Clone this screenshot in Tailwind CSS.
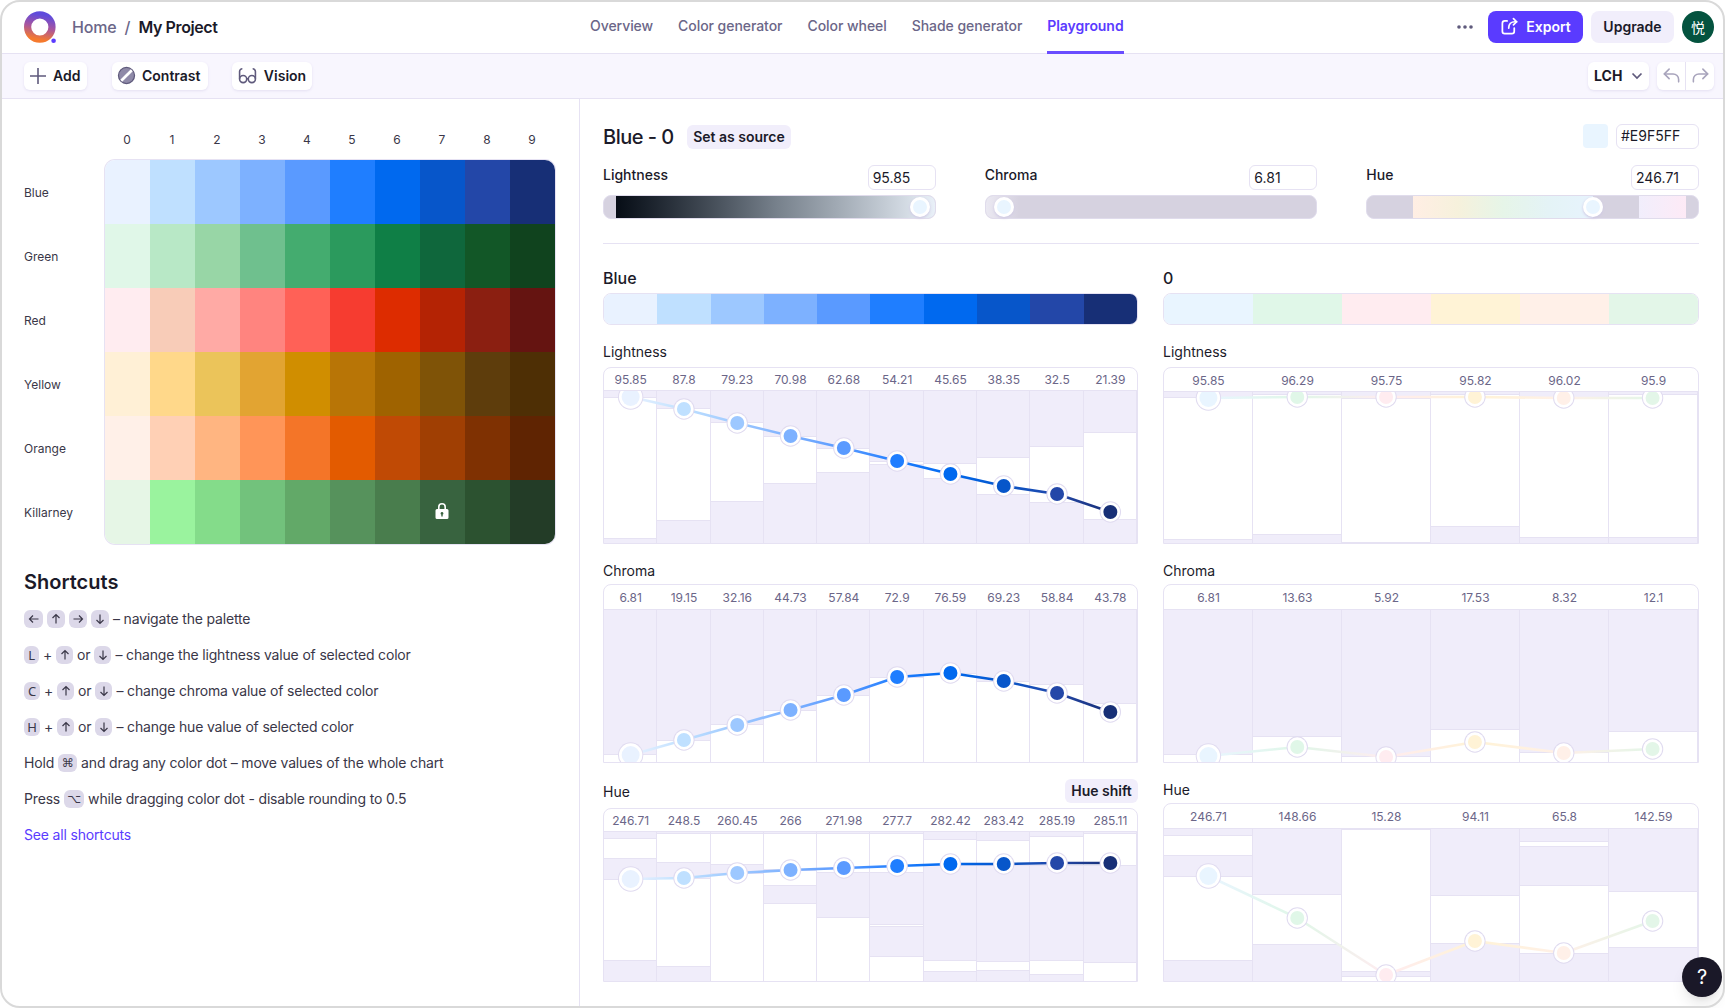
<!DOCTYPE html>
<html lang="en">
<head>
  <meta charset="UTF-8">
  <title>Palette Playground</title>
  <script src="https://cdn.jsdelivr.net/npm/@tailwindcss/browser@4"></script>
</head>
<body class="bg-white text-[#1b1a29] font-['Inter','DejaVu_Sans',sans-serif]">
<div class="relative w-[1725px] h-[1008px] overflow-hidden flex flex-col">

  <!-- Header -->
  <header class="h-[54px] shrink-0 border-b border-[#e6e2f3] flex items-stretch pl-6 pr-[11px]">
    <div class="w-[566px] flex items-center">
      <svg width="32" height="32" viewBox="0 0 32 32" class="shrink-0">
        <defs><linearGradient id="logo" x1="0.6" y1="0" x2="0.4" y2="1"><stop offset="0" stop-color="#5f4bdc"/><stop offset="0.5" stop-color="#a8559f"/><stop offset="1" stop-color="#f57a2e"/></linearGradient></defs>
        <circle cx="15.8" cy="16" r="12.2" fill="none" stroke="url(#logo)" stroke-width="7.2"/>
        <circle cx="29.6" cy="29.7" r="2.3" fill="#5a3bff"/>
      </svg>
      <span class="ml-[16px] text-base font-medium text-[#6b6688] tracking-[-0.01em]">Home</span>
      <span class="mx-[8px] text-base font-medium text-[#6b6688]">/</span>
      <span class="text-base font-semibold tracking-[-0.025em]">My Project</span>
    </div>
    <nav class="flex gap-[25px] text-sm font-medium text-[#6b6688] tracking-[-0.004em]">
      <a class="flex items-center pb-[2px]">Overview</a>
      <a class="flex items-center pb-[2px]">Color generator</a>
      <a class="flex items-center pb-[2px]">Color wheel</a>
      <a class="flex items-center pb-[2px]">Shade generator</a>
      <a class="flex items-center pb-[2px] text-[#5a3bff] font-semibold border-b-[3px] border-[#6a4dff] h-[54px] pt-[3px]">Playground</a>
    </nav>
    <div class="ml-auto flex items-center">
      <svg width="16" height="4" viewBox="0 0 16 4" class="mr-[15px]"><circle cx="2" cy="2" r="1.8" fill="#5f5a7c"/><circle cx="8" cy="2" r="1.8" fill="#5f5a7c"/><circle cx="14" cy="2" r="1.8" fill="#5f5a7c"/></svg>
      <button class="h-8 w-[95px] rounded-lg bg-[#5a3bff] text-white text-sm font-semibold flex items-center justify-center gap-[7px]">
        <svg width="19" height="19" viewBox="0 0 24 24" fill="none" stroke="currentColor" stroke-width="2.2" stroke-linecap="round" stroke-linejoin="round"><path d="M9 5H6a3 3 0 0 0-3 3v10a3 3 0 0 0 3 3h9a3 3 0 0 0 3-3v-4"/><path d="M11 14c0-5 3-8 8-8h2"/><path d="M17 2l4 4-4 4"/></svg>
        Export
      </button>
      <button class="ml-2 h-8 w-[83px] rounded-lg bg-[#f1eefb] text-sm font-semibold">Upgrade</button>
      <div class="ml-2 w-8 h-8 rounded-full bg-[#04533f] text-white text-sm flex items-center justify-center font-['Noto_Sans_CJK_SC',sans-serif]">悦</div>
    </div>
  </header>

  <!-- Toolbar -->
  <div class="h-[45px] shrink-0 bg-[#f8f6fe] border-b border-[#e6e2f3] flex items-center pl-6 pr-[11px] pb-[1px]">
    <button class="h-7 w-[63px] bg-white rounded-md shadow-sm shadow-[#e6e2f3] text-sm font-semibold flex items-center pl-[5px] gap-[6px]">
      <svg width="18" height="18" viewBox="0 0 18 18" fill="none" stroke="#5f5a7c" stroke-width="1.6"><path d="M9 1v16M1 9h16"/></svg>
      Add
    </button>
    <button class="ml-[25px] h-7 w-[96px] bg-white rounded-md shadow-sm shadow-[#e6e2f3] text-sm font-semibold flex items-center pl-[5px] gap-[6px]">
      <svg width="19" height="19" viewBox="0 0 18 18"><circle cx="9" cy="9" r="7.6" fill="#8f8aa8" stroke="#5f5a7c" stroke-width="1.2"/><path d="M4 14 14 4" stroke="#fff" stroke-width="2.6"/></svg>
      Contrast
    </button>
    <button class="ml-6 h-7 w-[80px] bg-white rounded-md shadow-sm shadow-[#e6e2f3] text-sm font-semibold flex items-center justify-center gap-[7px]">
      <svg width="19" height="19" viewBox="0 0 24 24" fill="none" stroke="#5f5a7c" stroke-width="2"><circle cx="6.500" cy="16.500" r="4.500"/><circle cx="17.500" cy="16.500" r="4.500"/><path d="M2 16V7a3.500 3.500 0 0 1 3.500-3.500M22 16V7a3.500 3.500 0 0 0-3.500-3.500M11 16h2"/></svg>
      Vision
    </button>
    <button class="ml-auto h-7 w-[61px] bg-white rounded-md shadow-sm shadow-[#e6e2f3] text-sm font-bold flex items-center pl-[6px] gap-[9px]">
      LCH
      <svg width="12" height="8" viewBox="0 0 12 8" fill="none" stroke="#5f5a7c" stroke-width="1.7"><path d="M1.500 1.500 6 6l4.500-4.500"/></svg>
    </button>
    <div class="ml-2 h-7 w-[57px] bg-white rounded-md shadow-sm shadow-[#e6e2f3] flex divide-x divide-[#e6e2f3]">
      <div class="flex-1 flex items-center justify-center">
        <svg width="19" height="19" viewBox="0 0 24 24" fill="none" stroke="#a8a4bc" stroke-width="2" stroke-linecap="round" stroke-linejoin="round"><path d="M9 4 3 10l6 6"/><path d="M3 10h11a7 7 0 0 1 7 7v3"/></svg>
      </div>
      <div class="flex-1 flex items-center justify-center">
        <svg width="19" height="19" viewBox="0 0 24 24" fill="none" stroke="#a8a4bc" stroke-width="2" stroke-linecap="round" stroke-linejoin="round"><path d="m15 4 6 6-6 6"/><path d="M21 10H10a7 7 0 0 0-7 7v3"/></svg>
      </div>
    </div>
  </div>

  <main class="flex-1 flex min-h-0">
    <!-- Left column -->
    <aside class="w-[580px] shrink-0 border-r border-[#e6e2f3] pl-6 pt-[33px]">
      <div class="ml-[80.5px] w-[450px] grid grid-cols-10 text-xs text-center text-[#3a3748] h-4 mb-[12px]">
        <span>0</span><span>1</span><span>2</span><span>3</span><span>4</span><span>5</span><span>6</span><span>7</span><span>8</span><span>9</span>
      </div>
      <div class="flex">
        <div class="w-[80.5px] text-xs text-[#3a3748]">
          <div class="h-16 pt-[1px] flex items-center">Blue</div>
          <div class="h-16 pt-[1px] flex items-center">Green</div>
          <div class="h-16 pt-[1px] flex items-center">Red</div>
          <div class="h-16 pt-[1px] flex items-center">Yellow</div>
          <div class="h-16 pt-[1px] flex items-center">Orange</div>
          <div class="h-16 pt-[1px] flex items-center">Killarney</div>
        </div>
        <div id="palette" class="relative w-[450px] h-[384px] grid grid-cols-10 rounded-[10px] overflow-hidden ring-1 ring-[#e6e2f3]">
          <svg class="absolute left-[329px] top-[342px]" width="16" height="18" viewBox="0 0 16 18" fill="#fff"><path d="M8 1a4 4 0 0 0-4 4v2H3a1.500 1.500 0 0 0-1.500 1.500v7A1.500 1.500 0 0 0 3 17h10a1.500 1.500 0 0 0 1.500-1.500v-7A1.500 1.500 0 0 0 13 7h-1V5a4 4 0 0 0-4-4Zm-2.400 6V5a2.400 2.400 0 0 1 4.800 0v2ZM8 10a1.400 1.400 0 0 1 .7 2.600V14.500H7.300v-1.900A1.400 1.400 0 0 1 8 10Z" fill-rule="evenodd"/></svg>
        </div>
      </div>

      <h2 class="mt-6 text-xl font-semibold leading-7">Shortcuts</h2>
      <div class="mt-[11px] flex flex-col gap-3 text-sm text-[#3a3748] tracking-[-0.012em]">
        <div class="h-6 flex items-center gap-[4px]">
          <kbd class="w-[19px] h-[18px] rounded-md bg-[#dcd8e9] flex items-center justify-center"><svg width="12" height="12" viewBox="0 0 12 12" fill="none" stroke="#3a3748" stroke-width="1.200"><path d="M10.500 6h-9M5 2.500 1.500 6 5 9.500"/></svg></kbd>
          <kbd class="w-[18px] h-[18px] rounded-md bg-[#dcd8e9] flex items-center justify-center"><svg width="12" height="12" viewBox="0 0 12 12" fill="none" stroke="#3a3748" stroke-width="1.200"><path d="M6 10.500v-9M2.500 5 6 1.500 9.500 5"/></svg></kbd>
          <kbd class="w-[18px] h-[18px] rounded-md bg-[#dcd8e9] flex items-center justify-center"><svg width="12" height="12" viewBox="0 0 12 12" fill="none" stroke="#3a3748" stroke-width="1.200"><path d="M1.500 6h9M7 2.500 10.500 6 7 9.500"/></svg></kbd>
          <kbd class="w-[18px] h-[18px] rounded-md bg-[#dcd8e9] flex items-center justify-center"><svg width="12" height="12" viewBox="0 0 12 12" fill="none" stroke="#3a3748" stroke-width="1.200"><path d="M6 1.500v9M2.500 7 6 10.500 9.500 7"/></svg></kbd>
          <span>– navigate the palette</span>
        </div>
        <div class="h-6 flex items-center gap-[4px]">
          <kbd class="w-[15px] h-[18px] rounded-md bg-[#dcd8e9] flex items-center justify-center text-[13px] font-sans">L</kbd>
          <span>+</span>
          <kbd class="w-[17px] h-[18px] rounded-md bg-[#dcd8e9] flex items-center justify-center"><svg width="12" height="12" viewBox="0 0 12 12" fill="none" stroke="#3a3748" stroke-width="1.200"><path d="M6 10.500v-9M2.500 5 6 1.500 9.500 5"/></svg></kbd>
          <span>or</span>
          <kbd class="w-[17px] h-[18px] rounded-md bg-[#dcd8e9] flex items-center justify-center"><svg width="12" height="12" viewBox="0 0 12 12" fill="none" stroke="#3a3748" stroke-width="1.200"><path d="M6 1.500v9M2.500 7 6 10.500 9.500 7"/></svg></kbd>
          <span>– change the lightness value of selected color</span>
        </div>
        <div class="h-6 flex items-center gap-[4px]">
          <kbd class="w-[16px] h-[18px] rounded-md bg-[#dcd8e9] flex items-center justify-center text-[13px] font-sans">C</kbd>
          <span>+</span>
          <kbd class="w-[17px] h-[18px] rounded-md bg-[#dcd8e9] flex items-center justify-center"><svg width="12" height="12" viewBox="0 0 12 12" fill="none" stroke="#3a3748" stroke-width="1.200"><path d="M6 10.500v-9M2.500 5 6 1.500 9.500 5"/></svg></kbd>
          <span>or</span>
          <kbd class="w-[17px] h-[18px] rounded-md bg-[#dcd8e9] flex items-center justify-center"><svg width="12" height="12" viewBox="0 0 12 12" fill="none" stroke="#3a3748" stroke-width="1.200"><path d="M6 1.500v9M2.500 7 6 10.500 9.500 7"/></svg></kbd>
          <span>– change chroma value of selected color</span>
        </div>
        <div class="h-6 flex items-center gap-[4px]">
          <kbd class="w-[16px] h-[18px] rounded-md bg-[#dcd8e9] flex items-center justify-center text-[13px] font-sans">H</kbd>
          <span>+</span>
          <kbd class="w-[17px] h-[18px] rounded-md bg-[#dcd8e9] flex items-center justify-center"><svg width="12" height="12" viewBox="0 0 12 12" fill="none" stroke="#3a3748" stroke-width="1.200"><path d="M6 10.500v-9M2.500 5 6 1.500 9.500 5"/></svg></kbd>
          <span>or</span>
          <kbd class="w-[17px] h-[18px] rounded-md bg-[#dcd8e9] flex items-center justify-center"><svg width="12" height="12" viewBox="0 0 12 12" fill="none" stroke="#3a3748" stroke-width="1.200"><path d="M6 1.500v9M2.500 7 6 10.500 9.500 7"/></svg></kbd>
          <span>– change hue value of selected color</span>
        </div>
        <div class="h-6 flex items-center gap-[4px]">
          <span>Hold</span>
          <kbd class="w-[19px] h-[18px] rounded-md bg-[#dcd8e9] flex items-center justify-center text-xs font-['DejaVu_Sans',sans-serif]">⌘</kbd>
          <span>and drag any color dot – move values of the whole chart</span>
        </div>
        <div class="h-6 flex items-center gap-[4px]">
          <span>Press</span>
          <kbd class="w-[20px] h-[18px] rounded-md bg-[#dcd8e9] flex items-center justify-center text-xs font-['DejaVu_Sans',sans-serif]">⌥</kbd>
          <span>while dragging color dot - disable rounding to 0.5</span>
        </div>
        <a class="h-6 flex items-center text-[#5a3bff]">See all shortcuts</a>
      </div>
    </aside>

    <!-- Right panel -->
    <section class="flex-1 pl-[23px] pr-[26px] pt-6">
      <div class="flex items-center h-[26px]">
        <h1 class="w-[84px] text-xl font-medium pt-[2px] tracking-[-0.025em]">Blue - 0</h1>
        <button class="mt-[2px] h-6 w-[104px] rounded-md bg-[#f1eefb] text-sm font-semibold">Set as source</button>
        <div class="ml-auto w-[25px] h-6 bg-[#e9f5ff] rounded-sm"></div>
        <div class="ml-2 w-[83px] h-[25px] border border-[#e6e2f3] rounded-md text-sm px-1 flex items-center">#E9F5FF</div>
      </div>

      <div class="mt-4 grid grid-cols-3 gap-x-[49px]">
        <div>
          <div class="flex justify-between items-start h-[25px]">
            <span class="text-sm font-medium leading-5">Lightness</span>
            <div class="w-[68px] h-[25px] border border-[#e6e2f3] rounded-md text-sm px-1 flex items-center">95.85</div>
          </div>
          <div class="relative mt-[5px] h-6 rounded-lg bg-[#d6d2e0] border border-[#e0dcec] overflow-hidden">
            <div class="absolute left-[12px] right-0 inset-y-0 bg-gradient-to-r from-[#070d16] via-[#76808b] to-[#e9f0f8]"></div>
          </div>
          <div class="relative h-0"><div class="absolute left-[307px] -top-[22px] w-[20px] h-[20px] rounded-full bg-[#e9f5ff] border-[3px] border-white shadow shadow-[#cfc9e4]"></div></div>
        </div>
        <div>
          <div class="flex justify-between items-start h-[25px]">
            <span class="text-sm font-medium leading-5">Chroma</span>
            <div class="w-[68px] h-[25px] border border-[#e6e2f3] rounded-md text-sm px-1 flex items-center">6.81</div>
          </div>
          <div class="relative mt-[5px] h-6 rounded-lg bg-[#d6d2e0] border border-[#e0dcec] overflow-hidden">
            <div class="absolute left-0 w-[33px] inset-y-0 bg-gradient-to-r from-[#ebe9f2] to-[#d6d2e0]"></div>
          </div>
          <div class="relative h-0"><div class="absolute left-[9px] -top-[22px] w-[20px] h-[20px] rounded-full bg-[#e9f5ff] border-[3px] border-white shadow shadow-[#cfc9e4]"></div></div>
        </div>
        <div>
          <div class="flex justify-between items-start h-[25px]">
            <span class="text-sm font-medium leading-5">Hue</span>
            <div class="w-[68px] h-[25px] border border-[#e6e2f3] rounded-md text-sm px-1 flex items-center">246.71</div>
          </div>
          <div class="relative mt-[5px] h-6 rounded-lg bg-[#d6d2e0] border border-[#e0dcec] overflow-hidden">
            <div class="absolute left-[46px] w-[180px] inset-y-0 bg-[linear-gradient(to_right,#ffeee4,#f6f1dc,#e6f5e8,#e4f3f6,#e7f3fd)]"></div>
            <div class="absolute left-[272px] w-[47px] inset-y-0 bg-gradient-to-r from-[#f1eefc] to-[#fdeaf6]"></div>
          </div>
          <div class="relative h-0"><div class="absolute left-[217px] -top-[22px] w-[20px] h-[20px] rounded-full bg-[#e9f5ff] border-[3px] border-white shadow shadow-[#cfc9e4]"></div></div>
        </div>
      </div>

      <div class="mt-6 border-t border-[#e6e2f3]"></div>

      <div class="mt-[22px] grid grid-cols-[535px_536px] gap-x-[25px]">
        <!-- Shades column -->
        <div>
          <div class="text-base font-medium h-6 leading-6">Blue</div>
          <div id="strip-left" class="mt-[3px] h-8 grid grid-cols-10 rounded-lg overflow-hidden border border-[#e6e2f3]"></div>
          <div class="mt-[17px] h-5 text-sm leading-5">Lightness</div>
          <div id="c-ll" class="mt-[5px] h-[177px]"></div>
          <div class="mt-[17px] h-5 text-sm leading-5">Chroma</div>
          <div id="c-lc" class="mt-[3px] h-[179px]"></div>
          <div class="mt-[16px] h-6 flex items-center justify-between">
            <span class="text-sm pt-[2px]">Hue</span>
            <button class="h-6 w-[73px] rounded-md bg-[#f1eefb] text-sm font-semibold">Hue shift</button>
          </div>
          <div id="c-lh" class="mt-[5px] h-[174px]"></div>
        </div>
        <!-- Hues column -->
        <div>
          <div class="text-base font-medium h-6 leading-6">0</div>
          <div id="strip-right" class="mt-[3px] h-8 grid grid-cols-6 rounded-lg overflow-hidden border border-[#e6e2f3]"></div>
          <div class="mt-[17px] h-5 text-sm leading-5">Lightness</div>
          <div id="c-rl" class="mt-[5px] h-[177px]"></div>
          <div class="mt-[17px] h-5 text-sm leading-5">Chroma</div>
          <div id="c-rc" class="mt-[3px] h-[179px]"></div>
          <div class="mt-[17px] h-5 text-sm leading-5">Hue</div>
          <div id="c-rh" class="mt-[3px] h-[179px]"></div>
        </div>
      </div>
    </section>
  </main>

  <!-- Help button -->
  <button class="absolute left-[1682px] top-[957px] w-10 h-10 rounded-full bg-[#1a1828] text-white text-xl shadow-lg">?</button>
  <!-- Window frame -->
  <div class="absolute inset-0 pointer-events-none rounded-[20px] border-2 border-[#d9d9d9]"></div>
</div>

<script>
  const palette = [
    ['#e9f2ff','#bfe0ff','#9dc8ff','#7db1ff','#5a9aff','#1f7eff','#0069ef','#0756ca','#2347a8','#172f76'],
    ['#e0f7e8','#b8e8c6','#98d6a6','#6fc08e','#44ac6f','#2b9a5d','#0f7f46','#0f673c','#125727','#10431e'],
    ['#ffecf0','#f8ccb8','#ffaaa5','#ff847f','#ff6157','#f63c30','#dd2c00','#b42304','#8b1f11','#651411'],
    ['#fff0d6','#ffd88a','#ebc45a','#e2a432','#d08e00','#b87506','#9f6300','#7f5307','#5e3d0c','#4e2f05'],
    ['#fff0e8','#ffd0b5','#ffb581','#ff9558','#f47528','#e35b00','#c04a05','#a03f03','#7f3102','#5f2402'],
    ['#e6f6e6','#9af39e','#84dc8a','#72c27c','#62a968','#56925c','#497d4d','#38633f','#2c5230','#233c27'],
  ];
  const pal = document.getElementById('palette');
  const lock = pal.querySelector('svg');
  palette.flat().forEach(c => {
    const d = document.createElement('div');
    d.style.background = c;
    pal.insertBefore(d, lock);
  });

  const blues = palette[0];
  const hues = ['#e9f5ff','#e0f7e8','#ffecf0','#fff3d6','#fff0e8','#e3f6e8'];
  const fill = (id, colors) => colors.forEach(c => {
    const d = document.createElement('div');
    d.style.background = c;
    document.getElementById(id).appendChild(d);
  });
  fill('strip-left', blues);
  fill('strip-right', hues);

  function chart(id, o) {
    const n = o.vals.length;
    const cols = n === 10 ? 'grid-cols-10' : 'grid-cols-6';
    const w = 533 / n;
    let head = '', body = '';
    o.vals.forEach((v, i) => {
      head += `<div class="flex items-center justify-center pt-[2px]">${v}</div>`;
      const bars = o.bars[i].map(b =>
        `<div class="absolute left-0 right-0 bg-white border-y border-[#e6e2f3]" style="top:${b[0]}px;height:${b[1] - b[0]}px"></div>`).join('');
      body += `<div class="relative border-r border-[#e6e2f3] last:border-r-0">${bars}</div>`;
    });
    let svg = '', defs = '';
    const xs = o.vals.map((_, i) => (i + 0.5) * w);
    for (let i = 0; i < n - 1; i++) {
      defs += `<linearGradient id="${id}-g${i}" gradientUnits="userSpaceOnUse" x1="${xs[i]}" y1="${o.dots[i]}" x2="${xs[i + 1]}" y2="${o.dots[i + 1] + 0.01}"><stop offset="0" stop-color="${o.colors[i]}"/><stop offset="1" stop-color="${o.colors[i + 1]}"/></linearGradient>`;
      svg += `<line x1="${xs[i]}" y1="${o.dots[i]}" x2="${xs[i + 1]}" y2="${o.dots[i + 1]}" stroke="url(#${id}-g${i})" stroke-width="2.6"/>`;
    }
    o.dots.forEach((y, i) => {
      const r = i === 0 ? 9 : 7;
      svg += `<circle cx="${xs[i]}" cy="${y}" r="${r + 3.7}" fill="#e0dbf0"/><circle cx="${xs[i]}" cy="${y}" r="${r + 2.7}" fill="#fff"/><circle cx="${xs[i]}" cy="${y}" r="${r}" fill="${o.colors[i]}"/>`;
    });
    document.getElementById(id).innerHTML =
      `<div class="h-full flex flex-col border border-[#e6e2f3] rounded-t-lg overflow-hidden">
        <div class="${o.row} shrink-0 grid ${cols} text-xs text-[#6b6688] border-b border-[#e6e2f3]">${head}</div>
        <div class="relative flex-1 grid ${cols} bg-[#f0edfa] overflow-hidden">${body}
          <svg class="absolute inset-0 w-full h-full"><defs>${defs}</defs>${svg}</svg>
        </div>
      </div>`;
  }

  chart('c-ll', { row: 'h-[23px]', colors: blues,
    vals: ['95.85','87.8','79.23','70.98','62.68','54.21','45.65','38.35','32.5','21.39'],
    bars: [[[6,148]],[[17,130]],[[31,111]],[[45,93]],[[57,82]],[[70,74]],[[72,88]],[[66,104]],[[55,112]],[[41,129]]],
    dots: [6,18,32,45,57,70,83,95,103,121] });
  chart('c-lc', { row: 'h-[25px]', colors: blues,
    vals: ['6.81','19.15','32.16','44.73','57.84','72.9','76.59','69.23','58.84','43.78'],
    bars: [[[144,160]],[[130,160]],[[114,160]],[[100,160]],[[85,160]],[[67,160]],[[63,160]],[[71,160]],[[74,160]],[[93,160]]],
    dots: [145,130,115,100,85,67,63,71,83,102] });
  chart('c-lh', { row: 'h-[23px]', colors: blues,
    vals: ['246.71','248.5','260.45','266','271.98','277.7','282.42','283.42','285.19','285.11'],
    bars: [[[6,27],[47,129]],[[1,31],[46,135]],[[1,33],[41,160]],[[1,38],[38,54],[71,160]],[[1,41],[85,160]],[[1,41],[92,95],[124,160]],[[7,34],[128,140]],[[8,34],[129,139]],[[4,34],[128,143]],[[1,34],[130,160]]],
    dots: [47,46,41,38,36,34,32,32,31,31] });
  chart('c-rl', { row: 'h-6', colors: hues,
    vals: ['95.85','96.29','95.75','95.82','96.02','95.9'],
    bars: [[[5,148]],[[2,143]],[[6,151]],[[2,135]],[[5,146]],[[2,146]]],
    dots: [6,5,5,5,6,6] });
  chart('c-rc', { row: 'h-[25px]', colors: hues,
    vals: ['6.81','13.63','5.92','17.53','8.32','12.1'],
    bars: [[[144,160]],[[126,160]],[[146,160]],[[119,160]],[[142,160]],[[121,160]]],
    dots: [146,137,147,132,143,139] });
  chart('c-rh', { row: 'h-[25px]', colors: hues,
    vals: ['246.71','148.66','15.28','94.11','65.8','142.59'],
    bars: [[[6,27],[47,132]],[[65,116]],[[0,143],[147,160]],[[66,115]],[[12,18],[56,125]],[[62,119]]],
    dots: [47,89,146,112,124,92] });
</script>
</body>
</html>
